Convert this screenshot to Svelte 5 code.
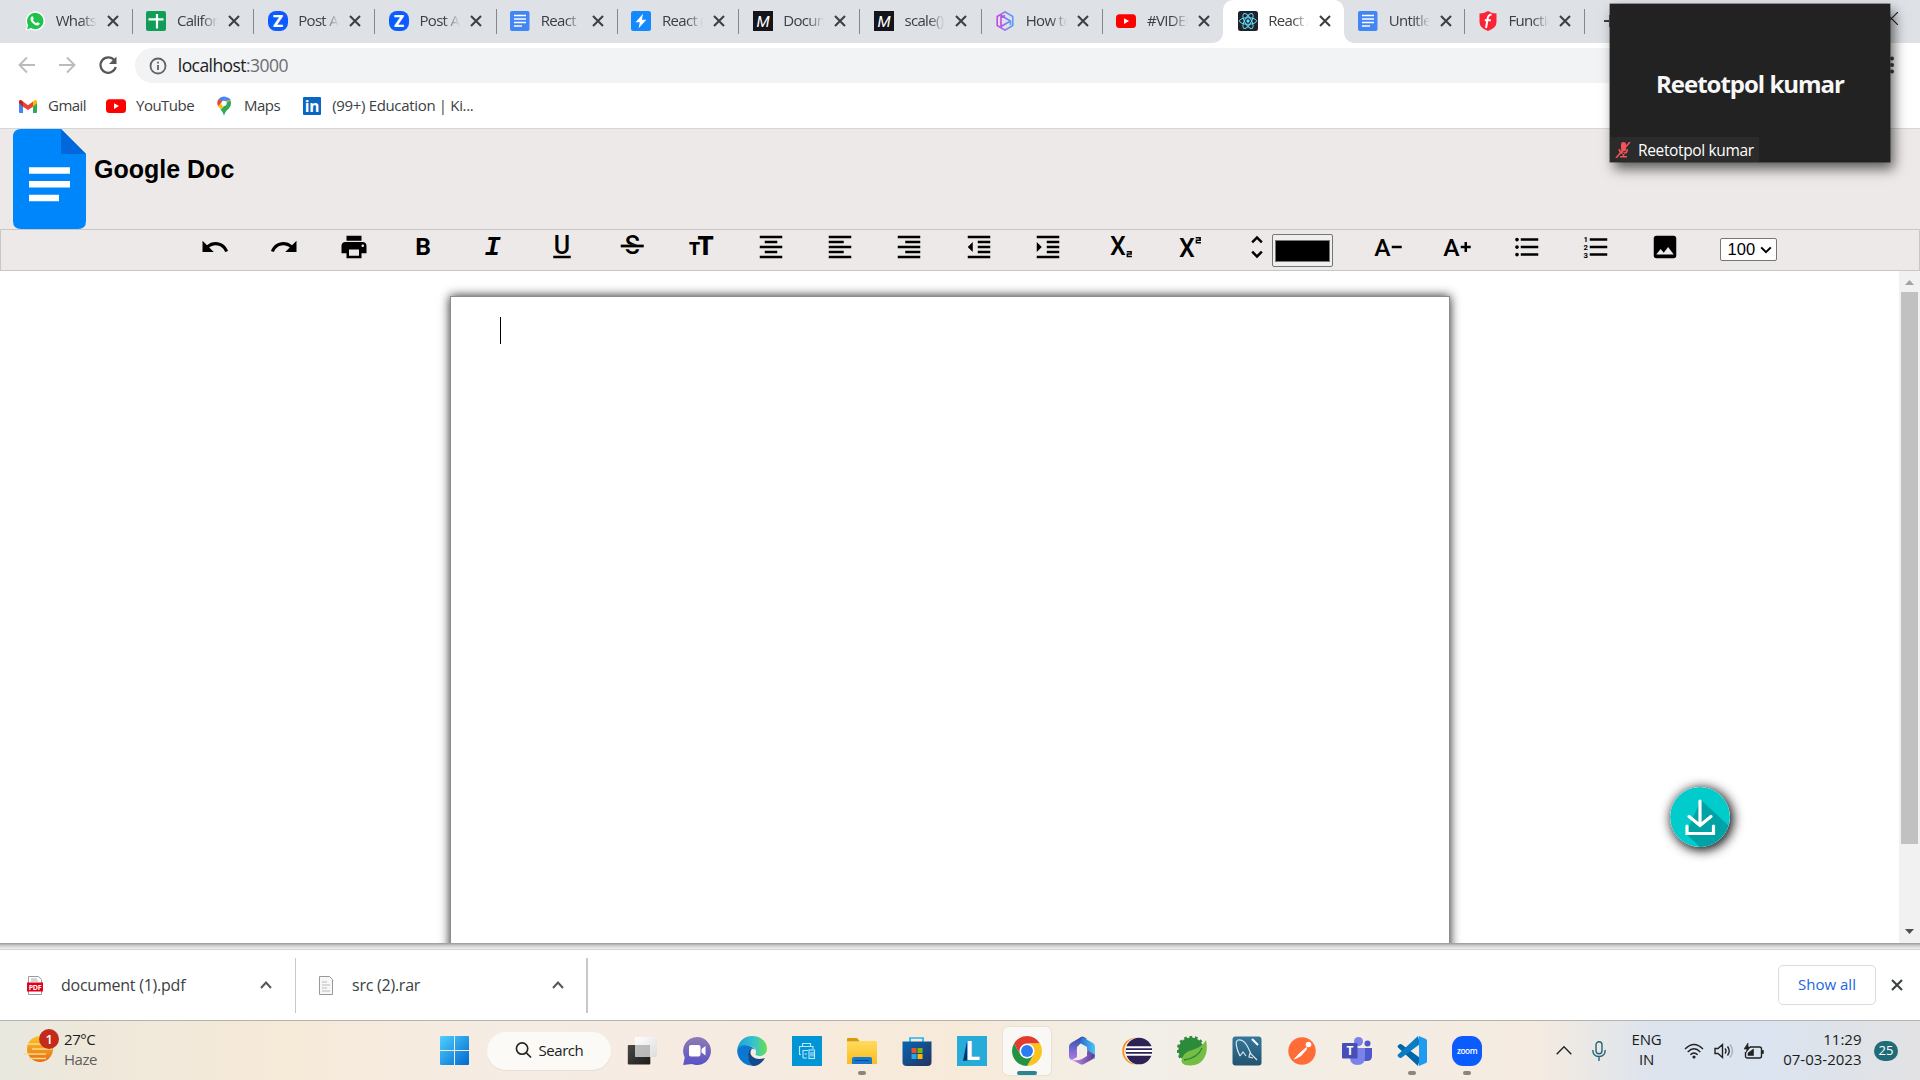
<script>
  const tabs = [
    { icon: 'whatsapp', title: 'WhatsApp' },
    { icon: 'sheets', title: 'California' },
    { icon: 'z', title: 'Post Att' },
    { icon: 'z', title: 'Post Att' },
    { icon: 'docs', title: 'React' },
    { icon: 'bolt', title: 'React (' },
    { icon: 'mdn', title: 'Document' },
    { icon: 'mdn', title: 'scale() -' },
    { icon: 'hex', title: 'How to c' },
    { icon: 'youtube', title: '#VIDEO' },
    { icon: 'react', title: 'React A', active: true },
    { icon: 'docs', title: 'Untitled' },
    { icon: 'shield', title: 'Functio' }
  ];
  const bookmarks = [
    { icon: 'gmail', title: 'Gmail' },
    { icon: 'youtube', title: 'YouTube' },
    { icon: 'maps', title: 'Maps' },
    { icon: 'linkedin', title: '(99+) Education | Ki...' }
  ];
  const tools = ['undo', 'redo', 'print', 'bold', 'italic', 'underline', 'strike', 'size', 'center', 'left', 'right', 'outdent', 'indent', 'sub', 'sup', 'unfold'];
  const tools2 = ['smaller', 'bigger', 'bullets', 'numbers', 'image'];
  const apps = [
    { id: 'taskview' }, { id: 'chat' }, { id: 'edge' }, { id: 'printer' },
    { id: 'folder', open: true }, { id: 'store' }, { id: 'l' },
    { id: 'chrome', active: true }, { id: 'm365' }, { id: 'eclipse' },
    { id: 'spring' }, { id: 'mysql' }, { id: 'postman' }, { id: 'teams' },
    { id: 'vscode', open: true }, { id: 'zoom', open: true }
  ];
</script>

{#snippet favicon(name)}
  <svg class="fav" viewBox="0 0 20 20">
    {#if name === 'whatsapp'}
      <path d="M.6 19.6 2 14.8A9.6 9.6 0 1 1 5.700 18.400Z" fill="#fff" />
      <path d="M2 18.200 3.200 14.300A8.200 8.200 0 1 1 6 17.100Z" fill="#1fc34b" />
      <path d="M6.300 5.800c.8-.9 1.500-.6 1.800.2l.6 1.500c.1.500-.8 1.100-.7 1.500.7 1.400 1.700 2.400 3.100 3 .5.200 1-1 1.500-.8l1.700.9c.7.4.2 1.600-.5 2-2 1.200-5.100-.5-6.700-2.500-1.400-1.600-2.400-3.900-.8-5.800Z" fill="#fff" />
    {:else if name === 'sheets'}
      <rect width="20" height="20" rx="2" fill="#0f9d58" />
      <path d="M2.500 8.400h15M11 3v14.500" stroke="#fff" stroke-width="2.200" />
    {:else if name === 'z'}
      <rect width="20" height="20" rx="8" fill="#0b5cff" />
      <text x="10" y="16" text-anchor="middle" font-family="Roboto" font-weight="900" font-size="17" fill="#fff">Z</text>
    {:else if name === 'docs'}
      <rect width="19.500" height="20" rx="2" fill="#4285f4" />
      <path d="M4 4.500h12M4 8h12M4 11.500h12M4 15h8" stroke="#fff" stroke-width="1.700" />
    {:else if name === 'bolt'}
      <rect width="20" height="20" rx="2.500" fill="#1389fd" />
      <path d="M12 2.800 4.600 11.300h4.200L7.600 17.200l7.800-8.500h-4.500Z" fill="#fff" />
    {:else if name === 'mdn'}
      <rect width="20" height="20" fill="#15141a" />
      <text x="10" y="15.600" text-anchor="middle" font-family="Roboto" font-style="italic" font-weight="400" font-size="15.500" fill="#fff">M</text>
    {:else if name === 'hex'}
      <g fill="none" stroke="url(#hexg)" stroke-width="1.600" stroke-linejoin="round">
        <path d="M10 .9 17.800 5.500v9L10 19.100 2.200 14.500v-9Z" /><path d="M6 4.500v11L15.500 10ZM6 6.500 10 4.500M15.500 10v4" />
      </g>
    {:else if name === 'youtube'}
      <rect y="3.200" width="20" height="13.800" rx="3.500" fill="#f00" /><path d="m8 7.300 5 2.800-5 2.800Z" fill="#fff" />
    {:else if name === 'react'}
      <rect width="20" height="20" rx="2.500" fill="#20232a" />
      <g fill="none" stroke="#61dafb" stroke-width="1">
        <ellipse cx="10" cy="10" rx="8.500" ry="3.300" /><ellipse cx="10" cy="10" rx="8.500" ry="3.300" transform="rotate(60 10 10)" /><ellipse cx="10" cy="10" rx="8.500" ry="3.300" transform="rotate(120 10 10)" />
      </g><circle cx="10" cy="10" r="1.700" fill="#61dafb" />
    {:else if name === 'shield'}
      <path d="M1.500 2.500Q5.500 2.600 10 0q4.500 2.600 8.500 2.500V11q0 6-8.500 9Q1.500 17 1.500 11Z" fill="#fa2435" />
      <path d="M13.500 3.500Q9.800 4 9.600 8L8 17M6.800 9.300h6" stroke="#fff" stroke-width="2" fill="none" />
    {:else if name === 'gmail'}
      <path d="M1 5v11q0 1 1 1h3V8Z" fill="#4285f4" /><path d="M19 5v11q0 1-1 1h-3V8Z" fill="#34a853" />
      <path d="M5 5.500v5.200L10 14l5-3.300V5.500L10 9.200Z" fill="#ea4335" /><path d="M1 5.500V7l4 3.700V5.500L3.500 4.300Q1 3.200 1 5.500Z" fill="#c5221f" /><path d="M19 5.500V7l-4 3.700V5.500l1.500-1.200Q19 3.200 19 5.500Z" fill="#fbbc04" />
    {:else if name === 'maps'}
      <path d="M10 .5a7 7 0 0 0-5.400 2.500L8 6l4.400-5Q11.500.5 10 .5Z" fill="#4285f4" /><path d="M12.400 1 8 6l4 3 4.600-5.500Q15 1.500 12.400 1Z" fill="#4285f4" />
      <path d="M4.600 3Q2.200 6.500 4.200 10.300L8.500 5.800Z" fill="#ea4335" /><path d="M4.200 10.300 6.500 13 15.800 3.500 12 5 8 6Z" fill="#fbbc04" />
      <path d="M16.400 4 6.500 13.500Q9 16 9.500 18.500q.5 1.500 1 0C11.500 14 17 12.500 17 7.500Q17 5.500 16.400 4Z" fill="#34a853" /><circle cx="10" cy="7.300" r="2.600" fill="#fff" />
    {:else if name === 'linkedin'}
      <rect x="1" y="1" width="18" height="18" rx="1" fill="#0a66c2" />
      <text x="10" y="16" text-anchor="middle" font-family="Open Sans" font-weight="700" font-size="15.500" fill="#fff">in</text>
    {/if}
  </svg>
{/snippet}

{#snippet tool(name)}
  <svg class="tool" viewBox="0 0 24 24">
    {#if name === 'undo'}<path d="M12.500 8c-2.650 0-5.050.99-6.900 2.600L2 7v9h9l-3.620-3.620c1.390-1.160 3.160-1.880 5.120-1.880 3.540 0 6.550 2.310 7.600 5.500l2.370-.78C21.080 11.030 17.150 8 12.500 8z" />
    {:else if name === 'redo'}<path d="M18.400 10.600C16.550 8.990 14.150 8 11.500 8c-4.650 0-8.580 3.030-9.960 7.220L3.900 16c1.050-3.190 4.050-5.500 7.600-5.500 1.950 0 3.730.72 5.120 1.880L13 16h9V7l-3.600 3.600z" />
    {:else if name === 'print'}<path d="M19 8H5c-1.660 0-3 1.340-3 3v6h4v4h12v-4h4v-6c0-1.660-1.340-3-3-3zm-3 11H8v-5h8v5zm3-7c-.55 0-1-.45-1-1s.45-1 1-1 1 .45 1 1-.45 1-1 1zm-1-9H6v4h12V3z" />
    {:else if name === 'bold'}<text x="12" y="18" text-anchor="middle" font-weight="700" font-size="19.700">B</text>
    {:else if name === 'italic'}<text x="11.600" y="18" text-anchor="middle" class="slab">I</text>
    {:else if name === 'underline'}<text x="12" y="17.300" text-anchor="middle" font-weight="500" font-size="20">U</text><path d="M5 19h14v2H5z" />
    {:else if name === 'strike'}<text x="12.200" y="17.800" text-anchor="middle" font-weight="500" font-size="20">S</text><path class="gap" d="M3 12h18" /><path d="M3 10.100h18.400v2.200H3z" />
    {:else if name === 'size'}<text x="15.600" y="18.600" text-anchor="middle" font-weight="900" font-size="20.500">T</text><text x="6.900" y="18.600" text-anchor="middle" font-weight="900" font-size="14">T</text>
    {:else if name === 'center'}<path d="M7 15v2h10v-2H7zm-4 6h18v-2H3v2zm0-8h18v-2H3v2zm4-6v2h10V7H7zM3 3v2h18V3H3z" />
    {:else if name === 'left'}<path d="M15 15H3v2h12v-2zm0-8H3v2h12V7zM3 13h18v-2H3v2zm0 8h18v-2H3v2zM3 3v2h18V3H3z" />
    {:else if name === 'right'}<path d="M3 21h18v-2H3v2zm6-4h12v-2H9v2zm-6-4h18v-2H3v2zm6-4h12V7H9v2zM3 3v2h18V3H3z" />
    {:else if name === 'outdent'}<path d="M11 17h10v-2H11v2zm-8-5 4 4V8l-4 4zm0 9h18v-2H3v2zM3 3v2h18V3H3zm8 6h10V7H11v2zm0 4h10v-2H11v2z" />
    {:else if name === 'indent'}<path d="M3 21h18v-2H3v2zM3 8v8l4-4-4-4zm8 9h10v-2H11v2zM3 3v2h18V3H3zm8 6h10V7H11v2zm0 4h10v-2H11v2z" />
    {:else if name === 'sub'}<text x="12" y="18" text-anchor="middle" font-weight="500" font-size="20">X</text><path class="two" d="M19 15.700h3.500v1.900h-3v2h3.600" />
    {:else if name === 'sup'}<text x="12" y="20" text-anchor="middle" font-weight="500" font-size="20">X</text><path class="two" d="M19 4.600h3.500v1.900h-3v2h3.600" />
    {:else if name === 'unfold'}<path d="M12 5.830 15.170 9l1.410-1.410L12 3 7.410 7.590 8.830 9 12 5.830zm0 12.340L8.830 15l-1.410 1.410L12 21l4.590-4.590L15.170 15 12 18.170z" />
    {:else if name === 'smaller'}<text x="7.500" y="19" text-anchor="middle" font-weight="500" font-size="19.700">A</text><path d="M15 11h8v2h-8z" />
    {:else if name === 'bigger'}<text x="7.500" y="19" text-anchor="middle" font-weight="500" font-size="19.700">A</text><path d="M20 11h3v2h-3v3h-2v-3h-3v-2h3V8h2z" />
    {:else if name === 'bullets'}<path d="M4 10.500c-.83 0-1.500.67-1.500 1.500s.67 1.500 1.500 1.500 1.500-.67 1.500-1.500-.67-1.500-1.500-1.500zm0-6c-.83 0-1.500.67-1.500 1.500S3.170 7.500 4 7.500 5.500 6.830 5.500 6 4.830 4.500 4 4.500zm0 12c-.83 0-1.500.68-1.500 1.500s.68 1.500 1.500 1.500 1.500-.68 1.500-1.500-.67-1.500-1.500-1.500zM7 19h14v-2H7v2zm0-6h14v-2H7v2zm0-8v2h14V5H7z" />
    {:else if name === 'numbers'}<g font-size="6.200" font-weight="700"><text x="2" y="8">1</text><text x="2" y="14.200">2</text><text x="2" y="20.400">3</text></g><path d="M7 19h14v-2H7zM7 13h14v-2H7zM7 5v2h14V5z" />
    {:else if name === 'image'}<path d="M21 19V5c0-1.100-.9-2-2-2H5c-1.100 0-2 .9-2 2v14c0 1.100.9 2 2 2h14c1.100 0 2-.9 2-2zM8.500 13.500l2.500 3.010L14.500 12l4.500 6H5l3.500-4.500z" />
    {/if}
  </svg>
{/snippet}

{#snippet app(id)}
  <svg class="app" viewBox="0 0 30 30">
    {#if id === 'taskview'}
      <rect x=".8" y="9" width="22.500" height="19.500" rx="1" fill="url(#dark)" /><rect x="8" y="1" width="22" height="20" rx="1" fill="url(#glass)" /><path d="M8 9h15v12H8z" fill="#aaa" opacity=".75" />
    {:else if id === 'chat'}
      <path d="M15 1a14 14 0 1 1-5 27.100L1.200 29 2.700 21.500A14 14 0 0 1 15 1Z" fill="url(#chatg)" /><rect x="7" y="9" width="11.500" height="11.500" rx="2" fill="#fff" /><path d="m19.500 13 4-3v9.500l-4-3Z" fill="#fff" />
    {:else if id === 'edge'}
      <path d="M.2 14C1 6 7 0 15 0c9 0 15 6 15 12.500 0 5-3.500 7.500-7.500 7.500-3 0-4.700-1-3.800-2.300C20 15 18 11 13 10 7 9 2 10 .2 14Z" fill="url(#edgeA)" />
      <path d="M.2 14C2 9.500 8 8.500 12.500 10c3 1 5 2.500 5.500 4-3-3-7 0-7 4 0 6 5 10.500 10 10.500A15 15 0 0 1 .2 14Z" fill="#0a78d0" />
      <path d="M11 18c0-3 1.500-5.200 4-5.200-5 6 3 13 13 9.200C25 27 21 30 17 30c-3 0-6-5-6-12Z" fill="#114a8b" />
    {:else if id === 'printer'}
      <rect width="30" height="30" fill="#0096d6" /><g fill="none" stroke="#bfe6f8" stroke-width="1.100"><path d="M10.500 10.500V7.500h8v3M9 18.500H7.500v-8H21V13M11 22v-7.500h5M11 22h4M12.500 18h2.500" /><rect x="17" y="14" width="5.500" height="8.500" /><path d="M19 16v4.500M21 16v4.500" /></g>
    {:else if id === 'folder'}
      <path d="M0 3q0-1 1-1h9l3 3.500H0Z" fill="#d99a06" /><path d="M0 6h12l2-1h15q1 0 1 1v22H0Z" fill="url(#fold)" /><path d="M5 28v-5q0-2 2-2h16q2 0 2 2v5Z" fill="#1677ce" /><path d="M8 24.500h14" stroke="#074a91" />
    {:else if id === 'store'}
      <path d="M8 6V2h13v4" fill="none" stroke="#24b3f4" stroke-width="1.700" /><path d="M.5 5.500h29V26q0 4-4 4h-21q-4 0-4-4Z" fill="url(#storeg)" />
      <path d="M9.500 12h5v5h-5z" fill="#f25022" /><path d="M15.500 12h5v5h-5z" fill="#7fba00" /><path d="M9.500 18h5v5h-5z" fill="#22a7f2" /><path d="M15.500 18h5v5h-5z" fill="#ffb900" />
    {:else if id === 'l'}
      <rect width="30" height="30" fill="#27acd9" /><path d="m10 5-4 20 7-1 1-17Z" fill="#082e63" /><text x="8" y="23.500" font-family="Open Sans" font-weight="700" font-size="27" fill="#fff">L</text>
    {:else if id === 'chrome'}
      <g transform="scale(.625)"><circle cx="24" cy="24" r="12" fill="#fff" /><path d="M24 12h20.780a24 24 0 0 0-41.560 0L13.610 30A12 12 0 0 1 24 12Z" fill="#e33b2e" /><path d="M34.390 30 24 48A24 24 0 0 0 44.780 12H24a12 12 0 0 1 10.390 18Z" fill="#fcc31e" /><path d="M13.610 30 3.220 12A24 24 0 0 0 24 48l10.390-18a12 12 0 0 1-20.780 0Z" fill="#229342" /><circle cx="24" cy="24" r="9.500" fill="#2a7cf0" /></g>
    {:else if id === 'm365'}
      <path d="m14 1-10 6q-2 1-2 4v9q0 3 3 4l5-3V11l5-5 5-3-3-2q-2-1-3 0Z" fill="url(#m3a)" /><path d="m15 1 11 6q2 1 2 4v12l-8-3v-9l-7-4Z" fill="url(#m3b)" /><path d="m5 24 8 4q2 1 4 0l9-5q2-2 2-4l-8-5v6l-5 3q-4 2-10 1Z" fill="url(#m3c)" /><circle cx="15" cy="15" r="5.300" fill="#f3efe8" />
    {:else if id === 'eclipse'}
      <circle cx="13.500" cy="15" r="13.300" fill="#f7941e" /><circle cx="15.300" cy="15" r="13.200" fill="#fff3e2" /><circle cx="17" cy="15" r="13.300" fill="#2c2255" /><path d="M4 11.200h26M4 15h26M4 18.800h26" stroke="#fff" stroke-width="2" />
    {:else if id === 'spring'}
      <circle cx="14" cy="14" r="12.600" fill="#2b8b3a" /><circle cx="14" cy="14" r="13" fill="none" stroke="#2b8b3a" stroke-width="2.600" stroke-dasharray="2.700 2.700" /><path d="M29 4c3 13-2 25-15 25.500Q8 30 5 27C4 24 5 19 10 16 16 13 24 13 29 4Z" fill="#77bc43" /><path d="M7 24Q21 22 25 12" fill="none" stroke="#2b8b3a" stroke-width="1.300" />
    {:else if id === 'mysql'}
      <rect x=".5" y=".5" width="29" height="29" rx="3" fill="url(#sqlg)" /><path d="M8 20C4 12 3 5 6 4c8-1 11 10 13 14l6 6M8 20l3-4 3 4M18 17l-1 4 4 1" fill="none" stroke="#d6e6f0" stroke-width="1.200" /><path d="m20 3 6 6" stroke="#fff" stroke-width="2" />
    {:else if id === 'postman'}
      <circle cx="15" cy="15" r="13.700" fill="#ff6c37" /><circle cx="21.500" cy="8.500" r="2.800" fill="#fff" /><path d="m19.500 11.500-7 6-5 5.500 6-3 5.500-6Z" fill="#fff" stroke="#fff" />
    {:else if id === 'teams'}
      <circle cx="16.500" cy="5.500" r="4.500" fill="#7b83eb" /><circle cx="25.500" cy="7.500" r="3" fill="#5059c9" /><path d="M21 12h9v8q0 5-5 5h-4Z" fill="#5059c9" /><path d="M8 12h15v9q0 8-7.500 8T8 21Z" fill="#7b83eb" /><rect y="7" width="15.500" height="15.500" rx="1" fill="#464eb8" /><text x="7.800" y="19" text-anchor="middle" font-family="Open Sans" font-weight="700" font-size="12" fill="#fff">T</text>
    {:else if id === 'vscode'}
      <path d="M21 30 1 11.500q-1-1 0-2l1.500-1.200q1-.8 2 0L23 22Z" fill="#0065a9" /><path d="M21 0 1 18.500q-1 1 0 2l1.500 1.200q1 .8 2 0L23 8Z" fill="#0a7cc5" /><path d="m22 0 7 3q1 .5 1 1.500v21q0 1-1 1.500l-7 3Z" fill="#1f9cf0" />
    {:else if id === 'zoom'}
      <rect width="30" height="30" rx="11" fill="#0b5cff" /><text x="15" y="17.800" text-anchor="middle" font-family="Open Sans" font-weight="600" font-size="8.300" fill="#fff">zoom</text>
    {/if}
  </svg>
{/snippet}

{#snippet cross()}
  <svg class="cross" viewBox="0 0 12 12"><path d="m1 1 10 10M11 1 1 11" /></svg>
{/snippet}

<svg class="defs">
  <defs>
    <linearGradient id="hexg" x1="0" x2="1"><stop stop-color="#c14be8" /><stop offset="1" stop-color="#5a9cf8" /></linearGradient>
    <linearGradient id="dark" x1="0" y1="0" x2="1" y2="1"><stop stop-color="#484845" /><stop offset="1" stop-color="#1c1c1b" /></linearGradient>
    <linearGradient id="glass" x1="0" y1="0" x2="1" y2="1"><stop stop-color="#fff" /><stop offset="1" stop-color="#dcdcdc" /></linearGradient>
    <linearGradient id="chatg" x1="0" y1="0" x2="0" y2="1"><stop stop-color="#8d7cb4" /><stop offset="1" stop-color="#5a51c7" /></linearGradient>
    <linearGradient id="edgeA" x1="0" x2="1"><stop stop-color="#1f9fdc" /><stop offset=".55" stop-color="#35c3cf" /><stop offset="1" stop-color="#68e04c" /></linearGradient>
    <linearGradient id="fold" x1="0" y1="0" x2="0" y2="1"><stop stop-color="#ffdb5e" /><stop offset="1" stop-color="#f9bc1d" /></linearGradient>
    <linearGradient id="storeg" x1="0" y1="0" x2="1" y2="1"><stop stop-color="#0765b4" /><stop offset="1" stop-color="#24335e" /></linearGradient>
    <linearGradient id="m3a" x1="0" y1="0" x2="0" y2="1"><stop stop-color="#2d4fae" /><stop offset="1" stop-color="#b07be6" /></linearGradient>
    <linearGradient id="m3b" x1="0" x2="1"><stop stop-color="#2a6bc9" /><stop offset="1" stop-color="#4bc6f8" /></linearGradient>
    <linearGradient id="m3c" x1="0" x2="1"><stop stop-color="#c08df0" /><stop offset="1" stop-color="#5a3c92" /></linearGradient>
    <linearGradient id="sqlg" x1="0" y1="0" x2="0" y2="1"><stop stop-color="#35789c" /><stop offset="1" stop-color="#235270" /></linearGradient>
    <linearGradient id="win" x1="0" y1="0" x2="1" y2="1"><stop stop-color="#4fd0ff" /><stop offset="1" stop-color="#0068cf" /></linearGradient>
    <linearGradient id="sun" x1="0" y1="0" x2="0" y2="1"><stop stop-color="#f9c825" /><stop offset="1" stop-color="#e96a16" /></linearGradient>
  </defs>
</svg>

<div class="screen">
  <div class="tabs">
    {#each tabs as t}
      <div class="tab" class:active={t.active}>
        {@render favicon(t.icon)}
        <span class="title">{t.title}</span>
        {@render cross()}
      </div>
    {/each}
    <svg class="plus" viewBox="0 0 12 12"><path d="M0 6h12M6 0v12" /></svg>
    <svg class="close" viewBox="0 0 13 13"><path d="m0 0 13 13M13 0 0 13" /></svg>
  </div>

  <div class="nav">
    <svg class="arrow" viewBox="0 0 20 20"><path d="M18 10H3M10 2.500 2.500 10l7.500 7.500" /></svg>
    <svg class="arrow" viewBox="0 0 20 20"><path d="M2 10h15M10 2.500l7.500 7.500-7.500 7.500" /></svg>
    <svg class="arrow reload" viewBox="0 0 20 20"><path d="M16.200 5.200A7.700 7.700 0 1 0 17.700 12" /><path class="tip" d="M18.500 1.500v7.500H11Z" /></svg>
    <div class="url">
      <svg class="info" viewBox="0 0 18 18"><circle cx="9" cy="9" r="7.500" /><path d="M9 8v5M9 4.800v1.800" /></svg>
      <span>localhost<i>:3000</i></span>
    </div>
    <svg class="dots" viewBox="0 0 4 18"><circle cx="2" cy="2.500" r="2" /><circle cx="2" cy="9" r="2" /><circle cx="2" cy="15.500" r="2" /></svg>
  </div>

  <div class="bookmarks">
    {#each bookmarks as b}
      <div class="bookmark">{@render favicon(b.icon)}<span>{b.title}</span></div>
    {/each}
  </div>

  <header>
    <svg class="logo" viewBox="0 0 73 100"><path d="M8 0h40l25 25v67q0 8-8 8H8q-8 0-8-8V8q0-8 8-8Z" fill="#0086fb" /><path d="M48 0v25h25Z" fill="#0068da" /><path d="M16 41.500h41M16 55.300h41M16 69h30" stroke="#fff" stroke-width="6.400" /></svg>
    <h1>Google Doc</h1>
  </header>

  <div class="toolbar">
    {#each tools as t}{@render tool(t)}{/each}
    <div class="color"><div></div></div>
    {#each tools2 as t}{@render tool(t)}{/each}
    <div class="select">100<svg viewBox="0 0 10 6"><path d="m1 .8 4 4 4-4" /></svg></div>
  </div>

  <main>
    <div class="canvas">
      <div class="sheet"><div class="caret"></div></div>
      <svg class="download" viewBox="0 0 60 60">
        <circle cx="30" cy="30" r="30" fill="#00cccb" />
        <path d="M31 13 58.500 38.500A30 30 0 0 1 30 60L15.500 46.500Z" fill="#00a2a5" />
        <path d="M30 14v24M19 29.500l11 9 11-9M17 39v7.500h26.500V39" fill="none" stroke="#fff" stroke-width="3.200" stroke-linecap="round" />
      </svg>
    </div>
    <div class="scrollbar">
      <svg class="up" viewBox="0 0 9 5"><path d="M0 5h9L4.500 0Z" /></svg>
      <div class="thumb"></div>
      <svg class="down" viewBox="0 0 9 5"><path d="M0 0h9L4.500 5Z" /></svg>
    </div>
  </main>
  <div class="edge-shadow"></div>

  <div class="shelf">
    <div class="file">
      <svg class="ficon" viewBox="0 0 16 19"><path d="M1.500.500h10l3 3v15h-13Z" fill="#fff" stroke="#999" /><path d="M4 3h6M4 5h7" stroke="#aaa" /><path d="M0 6.500h16v9H0z" fill="#e2001a" /><text x="8" y="13.800" text-anchor="middle" font-family="Open Sans" font-weight="700" font-size="7" fill="#fff">PDF</text></svg>
      <span>document (1).pdf</span>
      <svg class="chev" viewBox="0 0 12 8"><path d="m1 7 5-5.500L11 7" /></svg>
    </div>
    <div class="file second">
      <svg class="ficon" viewBox="0 0 16 19"><path d="M1.500.500h10l3 3v15h-13Z" fill="#f7f7f7" stroke="#999" /><path d="M4 6h5M4 9h8M4 12h5M4 15h8" stroke="#bbb" /></svg>
      <span>src (2).rar</span>
      <svg class="chev" viewBox="0 0 12 8"><path d="m1 7 5-5.500L11 7" /></svg>
    </div>
    <div class="showall">Show all</div>
    {@render cross()}
  </div>

  <footer>
    <div class="weather">
      <div class="sunbox">
        <svg viewBox="0 0 30 28"><circle cx="16" cy="14" r="13" fill="url(#sun)" /><path d="M3 9h16M8 14h20M0 19h22M5 23.500h17" stroke="#f7d98a" stroke-width="1.600" /></svg>
        <b>1</b>
      </div>
      <div class="wtext"><span>27°C</span><span class="dim">Haze</span></div>
    </div>
    <svg class="start" viewBox="0 0 29 29"><path d="M1 0h13v14H0V1q0-1 1-1ZM15 0h13q1 0 1 1v13H15ZM0 15h14v14H1q-1 0-1-1ZM15 15h14v13q0 1-1 1H15Z" fill="url(#win)" /></svg>
    <div class="search"><svg viewBox="0 0 18 18"><circle cx="7.500" cy="7.500" r="6" /><path d="m12 12 5 5" /></svg>Search</div>
    <div class="apps">
      {#each apps as a}
        <div class="slot" class:open={a.open} class:active={a.active}>{@render app(a.id)}</div>
      {/each}
    </div>
    <div class="tray">
      <svg class="tchev" viewBox="0 0 16 9"><path d="m.700 8.300 7.300-7.500 7.300 7.500" /></svg>
      <svg class="mic" viewBox="0 0 14 20"><rect x="4" y=".8" width="6" height="12" rx="3" /><path d="M.8 9q0 6.500 6.200 6.500T13.200 9M7 15.500V20" /></svg>
      <div class="lang"><span>ENG</span><span>IN</span></div>
      <svg class="wifi" viewBox="0 0 20 16"><path d="M1 6q9-9 18 0M3.700 9q6.300-6.300 12.600 0M6.400 11.800q3.600-3.600 7.200 0" /><circle cx="10" cy="14" r="1.600" fill="#222" stroke="none" /></svg>
      <svg class="vol" viewBox="0 0 20 16"><path d="M1 5.500h3L8.500 1.500v13L4 10.500H1ZM11 5.500q2 2.500 0 5M13.500 3.500q3.500 4.500 0 9" /><path d="M16 1.500q5 6.500 0 13" stroke="#aab0ba" /></svg>
      <svg class="bat" viewBox="0 0 20 16"><path d="M6 4h9.500q2 0 2 2v7q0 2-2 2h-12q-2 0-2-2V9" /><path d="M18 7.500h1.500v3H18ZM4 0 0 6h3L2 9.500 6.500 4H4ZM4 12.500V10l5.500-4v6.500Z" fill="#222" stroke="#222" stroke-width=".6" /></svg>
      <div class="clock"><span>11:29</span><span>07-03-2023</span></div>
      <div class="count">25</div>
    </div>
  </footer>

  <div class="call">
    <strong>Reetotpol kumar</strong>
    <div class="who">
      <svg viewBox="0 0 16 16"><path d="M6 2q0-2 2.500-2T11 2v5q0 2.500-2.500 2.500T6 7ZM3.500 7q0 5 5 5T13 7l-1.500 0q0 3.500-3 3.500T5 7ZM7.700 11h1.600v3H12v1.500H5V14h2.700Z" fill="#f2545b" /><path d="M15 0 1 16" stroke="#f2545b" stroke-width="1.600" /></svg>
      Reetotpol kumar
    </div>
  </div>
</div>

<style>
  :global(body) { margin: 0; overflow: hidden; }
  * { box-sizing: border-box; }
  svg { display: block; flex: none; }
  .defs { position: absolute; width: 0; height: 0; }
  .screen { position: relative; width: 1920px; height: 1080px; overflow: hidden; display: flex; flex-direction: column; background: #fff; font-family: "Open Sans", "Noto Sans", sans-serif; color: #3c4043; white-space: nowrap; }
  .fav { width: 20px; height: 20px; }
  .cross { width: 12px; height: 12px; }
  .cross path { stroke: #3c4043; stroke-width: 2.100; }

  .tabs { height: 43px; flex: none; display: flex; background: #dee1e6; padding-left: 10.500px; }
  .tab { position: relative; width: 121.250px; flex: none; height: 43px; display: flex; align-items: center; padding: 0 0 1px 14.700px; }
  .tab:nth-child(n + 12) { width: 119.700px; padding-left: 14px; }
  .tab::after { content: ""; position: absolute; right: -1px; top: 9px; width: 1px; height: 25px; background: #84878c; }
  .tab:nth-child(10)::after { display: none; }
  .tab.active { background: #fff; border-radius: 10px 10px 0 0; }
  .tab.active::before, .tab.active::after { content: ""; position: absolute; top: auto; bottom: 0; width: 10px; height: 10px; }
  .tab.active::before { left: -10px; background: radial-gradient(circle at 0 0, transparent 9.500px, #fff 10px); }
  .tab.active::after { right: -10px; background: radial-gradient(circle at 100% 0, transparent 9.500px, #fff 10px); }
  .title { width: 41px; margin: -2px 10px 0 10.500px; overflow: hidden; font-size: 15px; letter-spacing: -.045em; line-height: 24px; mask-image: linear-gradient(90deg, #000 60%, transparent 100%); }
  .plus { width: 12px; height: 12px; margin: 15px 0 0 20px; }
  .plus path { stroke: #3c4043; stroke-width: 2; }
  .close { width: 13px; height: 13px; margin: 12px 22px 0 auto; }
  .close path { stroke: #222; stroke-width: 1.200; }

  .nav { height: 42px; flex: none; display: flex; align-items: center; padding: 2px 26px 0 17px; }
  .arrow { width: 20px; height: 20px; margin-right: 20.400px; fill: none; stroke: #b9bbbe; stroke-width: 1.900; }
  .reload { stroke: #54585c; stroke-width: 2.200; margin-right: 17px; }
  .tip { fill: #54585c; stroke: none; }
  .url { flex: 1; height: 35px; margin: 1px 14px 0 0; border-radius: 18px; background: #f1f3f4; display: flex; align-items: center; padding-left: 14px; gap: 11px; font-size: 17.500px; letter-spacing: -.032em; color: #202124; }
  .url span { margin-top: -2px; }
  .url i { font-style: normal; color: #6a6e73; }
  .info { width: 18px; height: 18px; fill: none; stroke: #5f6368; stroke-width: 1.800; }
  .dots { width: 4px; height: 18px; fill: #3c4043; }

  .bookmarks { height: 44px; flex: none; display: flex; align-items: center; padding: 0 0 2px 18px; border-bottom: 1px solid #d5d6d8; font-size: 15px; letter-spacing: -.035em; }
  .bookmark { display: flex; align-items: center; gap: 10px; margin-right: 20px; }
  .bookmark span { margin-top: -2px; }
  .bookmark:nth-child(3) { margin-right: 22px; }
  .bookmark:nth-child(4) { letter-spacing: -.022em; }

  header { height: 100px; flex: none; display: flex; background: #ede9e8; padding-left: 13px; }
  .logo { width: 73px; height: 100px; }
  h1 { margin: 26px 0 0 8px; font: bold 25px/29px "Liberation Sans", sans-serif; color: #000; }

  .toolbar { height: 42px; flex: none; display: flex; align-items: flex-start; padding: 2px 0 0 199px; background: #ede9e8; border: 1px solid #c8c6c6; font-family: "Liberation Sans", sans-serif; }
  .tool { width: 30px; height: 30px; margin-right: 39.450px; overflow: visible; font-family: Roboto, sans-serif; fill: #000; }
  .tool:nth-child(16) { margin-right: 0; }
  .tool:nth-child(n + 18) { margin-right: 39.300px; }
  .slab { font: italic bold 21.500px "Liberation Mono", monospace; }
  .gap { stroke: #ede9e8; stroke-width: 3.500; }
  .two { fill: none; stroke: #000; stroke-width: 1.200; }
  .color { width: 61.500px; height: 33px; margin: 2px 40px 0 0; padding: 5px 2px 4px; background: #efefef; border: 1px solid #767676; border-radius: 2px; }
  .color div { height: 22px; background: #000; border: 1px solid #777; }
  .select { display: flex; align-items: center; gap: 5px; width: 57px; height: 23px; margin-top: 6px; padding-left: 7px; border: 1px solid #767676; background: #fff; color: #000; font-size: 16.500px; border-radius: 2px; }
  .select svg { width: 12px; height: 8px; fill: none; stroke: #000; stroke-width: 1.700; }

  main { height: 672px; flex: none; display: flex; }
  .canvas { position: relative; flex: 1; overflow: hidden; display: flex; justify-content: center; padding-top: 25px; }
  .sheet { width: 1000px; height: 1290px; flex: none; margin-left: 1px; padding: 20px 0 0 49px; border: 1px solid #8c8c8c; background: #fff; box-shadow: 0 0 10px #222; }
  .caret { width: 1px; height: 27px; background: #000; }
  .download { position: absolute; left: 1670px; top: 516px; width: 60px; height: 60px; border-radius: 50%; box-shadow: 2px 2px 12px 1px #000; }
  .scrollbar { width: 21px; display: flex; flex-direction: column; align-items: center; background: #f1f1f1; padding: 9px 0 9px; }
  .scrollbar svg { width: 9px; height: 5px; }
  .up { fill: #a3a3a3; }
  .down { fill: #505050; margin-top: auto; }
  .thumb { width: 17px; height: 552px; margin-top: 7px; background: #c1c1c1; }
  .edge-shadow { height: 6px; flex: none; background: linear-gradient(#989898, #c9c9c9 40%, #f0f0f0); }

  .shelf { height: 72px; flex: none; display: flex; align-items: center; border-top: 1px solid #d4d4d4; border-bottom: 1px solid #b4b4ae; padding-right: 17px; font-size: 16px; }
  .file { width: 296px; height: 55px; display: flex; align-items: center; padding: 0 23px 0 27px; border-right: 1px solid #c8c8c8; letter-spacing: -.015em; }
  .second { width: 292px; padding: 0 22px 0 22px; border-right-width: 2px; }
  .ficon { width: 16px; height: 19px; }
  .file span { margin: -1px 0 0 18px; }
  .chev { width: 12px; height: 8px; margin-left: auto; fill: none; stroke: #54585c; stroke-width: 2; }
  .showall { width: 98px; height: 40px; margin: -1px 15px 0 auto; border: 1px solid #dadce0; border-radius: 5px; display: flex; align-items: center; justify-content: center; color: #1a66e0; font-size: 15px; font-weight: 500; padding-bottom: 2px; }

  footer { height: 59px; flex: none; display: flex; align-items: center; color: #1b1b1b; font-size: 15px; letter-spacing: -.03em; background: linear-gradient(90deg, #e8e8e0 0, #efe8da 5%, #f6ead9 15%, #f5ece4 27%, #f6ebe0 40%, #f7ead9 50%, #f2efe8 59%, #f3ede4 70%, #f5ebe0 80%, #dde4ee 86%, #dbe4f0 92%, #e2e2e3 100%); }
  .weather { width: 440px; display: flex; align-items: center; padding-left: 24px; }
  .sunbox { position: relative; margin: -3px 10px 0 0; }
  .sunbox svg { width: 30px; height: 28px; }
  .sunbox b { position: absolute; left: 15px; top: -6px; width: 20px; height: 20px; border-radius: 50%; background: #c42b1c; color: #fff; font: 600 13px/20px "Open Sans", sans-serif; text-align: center; }
  .wtext, .lang, .clock { display: flex; flex-direction: column; line-height: 20px; margin-top: -3px; }
  .dim { color: #5f5f5c; }
  .start { width: 29px; height: 29px; }
  .search { width: 124px; height: 38px; margin-left: 17.500px; display: flex; align-items: center; gap: 7px; padding: 0 0 1px 28px; border-radius: 20px; background: #fcfaf6; box-shadow: 0 1px 1px #0001; }
  .search svg { width: 17px; height: 18px; fill: none; stroke: #222; stroke-width: 1.700; }
  .apps { display: flex; margin-left: 3.500px; }
  .slot { position: relative; width: 55px; height: 60px; display: grid; place-items: center; }
  .app { width: 30px; height: 30px; position: relative; }
  .open::after { content: ""; position: absolute; bottom: 6px; left: 23.500px; width: 8px; height: 4px; border-radius: 2px; background: #8a857d; }
  .active.slot::before { content: ""; position: absolute; left: 3.500px; top: 6px; width: 48px; height: 48px; border-radius: 5px; background: #faf8f4; box-shadow: 0 0 1px 1px #0000000d; }
  .active.slot::after { content: ""; position: absolute; bottom: 6px; left: 17.500px; width: 20px; height: 4px; border-radius: 2px; background: #2a8593; }
  .tray { display: flex; align-items: center; margin-left: auto; padding-right: 22px; }
  .tray svg { fill: none; stroke: #222; stroke-width: 1.400; }
  .tchev { width: 16px; height: 9px; margin-right: 20px; }
  .tray .mic { width: 14px; height: 20px; stroke: #246575; }
  .lang { width: 32px; margin: -3px 21px 0 25px; align-items: center; letter-spacing: -.01em; }
  .wifi { width: 20px; height: 16px; }
  .vol { width: 20px; height: 16px; margin: 0 10px; }
  .bat { width: 20px; height: 16px; }
  .clock { width: 78px; margin: -3px 12.500px 0 20px; align-items: flex-end; letter-spacing: 0; }
  .count { width: 24px; height: 20px; border-radius: 10px; background: #1f6b78; color: #fff; font-size: 13px; line-height: 19px; text-align: center; letter-spacing: 0; }

  .call { position: absolute; left: 1610px; top: 4px; width: 280px; height: 158px; background: #222; box-shadow: 4px 7px 12px #0009, 0 0 0 .5px #555; color: #fff; display: flex; flex-direction: column; justify-content: flex-end; }
  .call strong { position: absolute; inset: 0; display: grid; place-items: center; font-size: 24px; font-weight: 700; letter-spacing: -.042em; color: #f7f7f7; }
  .who { width: 149px; height: 25px; display: flex; align-items: center; gap: 7px; padding-left: 5px; background: #2b2b2b; font-size: 15.500px; letter-spacing: -.023em; }
  .who svg { width: 16px; height: 16px; }
</style>
